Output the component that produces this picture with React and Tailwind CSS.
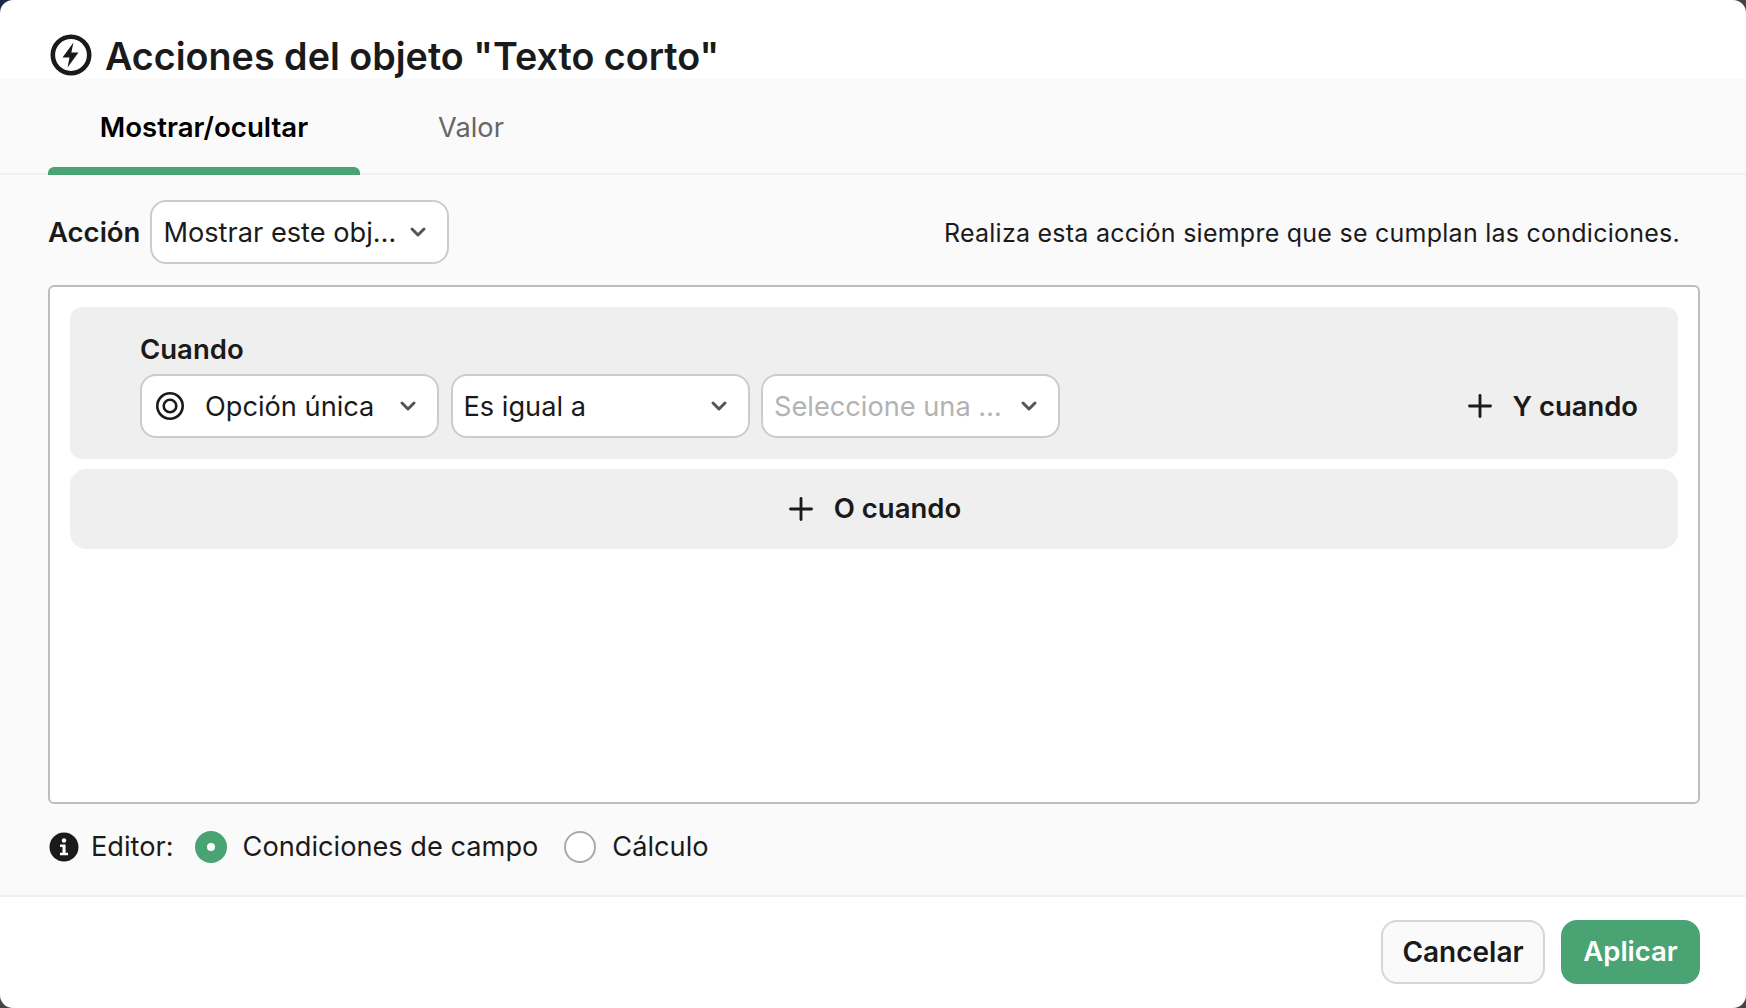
import React from "react";
import { ChevronDown, Plus } from "lucide-react";

const font = "font-['Inter','Liberation_Sans',sans-serif]";

function Select({ className, children, icon, placeholder }) {
  return (
    <div className={`flex h-16 items-center rounded-2xl border-2 border-[#cccccc] bg-white pr-[17px] pl-[11px] ${className}`}>
      {icon}
      <span className={`min-w-0 flex-1 truncate pt-[2px] text-[27.2px] ${placeholder ? "text-[#b3b3b3]" : "text-[#1a1a1a]"}`}>{children}</span>
      <ChevronDown className="ml-2 h-6 w-6 shrink-0 text-[#555555]" strokeWidth={3} />
    </div>
  );
}

export default function App() {
  return (
    <div className={`h-[1008px] w-[1746px] overflow-hidden bg-[linear-gradient(135deg,#1e2a45_3%,#444444_3%)] ${font} text-[#1a1a1a]`}>
      <div className="flex h-full flex-col overflow-hidden rounded-[13px] bg-white">
        <header className="flex h-[79px] shrink-0 items-start gap-[13px] pt-[34px] pl-[50px]">
          <svg viewBox="0 0 42 42" className="h-[42px] w-[42px] shrink-0" fill="none">
            <circle cx="21" cy="21" r="18.2" stroke="#1a1a1a" strokeWidth="4.6" />
            <path d="M23.5 8.5 12.5 23.5h7l-2 10 11-15h-7.2z" fill="#1a1a1a" />
          </svg>
          <h1 className="text-[37.7px] leading-[44px] font-semibold">Acciones del objeto "Texto corto"</h1>
        </header>
        <main className="flex min-h-0 flex-1 flex-col bg-[#fafafa]">
          <nav className="flex h-[96px] shrink-0 border-b-2 border-[#f0f0f0] pl-12">
            <div className="relative flex w-[312px] items-center justify-center pt-1 text-[27.6px] font-semibold text-black">
              Mostrar/ocultar
              <span className="absolute right-0 bottom-[-2px] left-0 h-2 rounded-t-md bg-[#4aa373]" />
            </div>
            <div className="flex w-[222px] items-center justify-center pt-1 text-[27.2px] text-[#666666]">Valor</div>
          </nav>
          <div className="flex flex-1 flex-col pt-[25px] pr-[46px] pl-12">
            <div className="flex h-[64px] items-center justify-between">
              <div className="flex items-center gap-[10px]">
                <span className="pt-[2px] text-[27.5px] font-semibold">Acción</span>
                <Select className="w-[299px]">Mostrar este objeto</Select>
              </div>
              <p className="pt-1 pr-5 text-[25px] tracking-[0.25px]">Realiza esta acción siempre que se cumplan las condiciones.</p>
            </div>
            <section className="mt-[21px] flex h-[519px] flex-col gap-[10px] rounded-md border-2 border-[#bdbdbd] bg-white p-5">
              <div className="flex h-[152px] flex-col rounded-xl bg-[#efefef] pr-[40px] pl-[70px]">
                <div className="mt-[23px] text-[27.5px] leading-[38px] font-semibold">Cuando</div>
                <div className="mt-[6px] flex items-center gap-[11.5px]">
                  <Select
                    className="w-[299px]"
                    icon={
                      <svg viewBox="0 0 30 30" className="mr-[20px] ml-[2px] h-[30px] w-[30px] shrink-0" fill="none" stroke="#1a1a1a" strokeWidth="2.6">
                        <circle cx="15" cy="15" r="12.7" />
                        <circle cx="15" cy="15" r="6.3" />
                      </svg>
                    }
                  >
                    Opción única
                  </Select>
                  <Select className="w-[299px]">Es igual a</Select>
                  <Select className="w-[299px]" placeholder>Seleccione una opción</Select>
                  <button className="ml-auto flex items-center gap-[15px] text-[27.4px] font-semibold">
                    <Plus className="h-9 w-9" strokeWidth={1.9} />
                    <span className="pt-[2px]">Y cuando</span>
                  </button>
                </div>
              </div>
              <button className="flex h-[80px] items-center justify-center gap-[15px] rounded-2xl bg-[#efefef] pr-1 text-[27.5px] font-semibold">
                <Plus className="h-9 w-9" strokeWidth={1.9} />
                O cuando
              </button>
            </section>
            <div className="mt-[23px] flex items-center text-[27.2px]">
              <svg viewBox="0 0 30 30" className="ml-[1px] h-[30px] w-[30px] shrink-0">
                <circle cx="15" cy="15" r="14.5" fill="#1a1a1a" />
                <circle cx="15" cy="8.5" r="2.2" fill="#fff" />
                <path d="M11 12.5h5.6v8.2H19v2.6h-8v-2.6h2.5v-5.6H11z" fill="#fff" />
              </svg>
              <span className="ml-[12px]">Editor:</span>
              <span className="ml-[21px] flex h-8 w-8 items-center justify-center rounded-full bg-[#4aa373]">
                <span className="h-2 w-2 rounded-full bg-white" />
              </span>
              <span className="ml-4">Condiciones de campo</span>
              <span className="ml-[26px] h-8 w-8 rounded-full border-2 border-[#aaaaaa] bg-white" />
              <span className="ml-4">Cálculo</span>
            </div>
          </div>
        </main>
        <footer className="flex h-[113px] shrink-0 items-start justify-end gap-4 border-t-2 border-[#f0f0f0] pt-[23px] pr-[46px]">
          <button className="h-16 w-[164px] rounded-2xl border-2 border-[#d6d6d6] bg-[#fafafa] text-[28px] font-semibold">Cancelar</button>
          <button className="h-16 w-[139px] rounded-2xl bg-[#4aa373] text-[27.5px] font-semibold text-white">Aplicar</button>
        </footer>
      </div>
    </div>
  );
}
